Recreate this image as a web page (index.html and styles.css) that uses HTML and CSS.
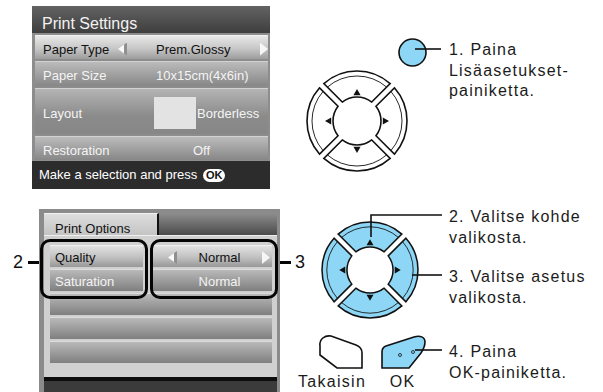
FILE: index.html
```html
<!DOCTYPE html>
<html lang="fi">
<head>
<meta charset="UTF-8">
<meta name="viewport" content="width=device-width, initial-scale=1.0">
<title>Lisäasetukset</title>
<link rel="stylesheet" href="styles.css">
</head>
<body>

<!-- Vaihe 1: Print Settings -näyttö ja Lisäasetukset-painike -->
<section class="step step-one">
  <div class="lcd lcd-settings">
    <div class="lcd-title">Print Settings</div>
    <div class="lcd-rows">
      <div class="lcd-row is-active">
        <span class="cell-label">Paper Type</span>
        <span class="arrow arrow-left"></span>
        <span class="cell-value">Prem.Glossy</span>
        <span class="arrow arrow-right"></span>
      </div>
      <div class="lcd-row row-size">
        <span class="cell-label">Paper Size</span>
        <span></span>
        <span class="cell-value">10x15cm(4x6in)</span>
      </div>
      <div class="lcd-row row-tall">
        <span class="cell-label">Layout</span>
        <span></span>
        <span class="cell-value"><span class="layout-thumb"></span>Borderless</span>
      </div>
      <div class="lcd-row">
        <span class="cell-label">Restoration</span>
        <span></span>
        <span class="cell-value value-off">Off</span>
      </div>
    </div>
    <div class="lcd-foot">Make a selection and press <span class="ok-key">OK</span></div>
  </div>

  <svg class="pad-art pad-art-one" width="179" height="195" viewBox="0 0 179 195">
    <defs>
      <g id="quarter">
        <path d="M-33.17 -37.41A50 50 0 0 1 33.17 -37.41L14.72 -18.96A24 24 0 0 0 -14.72 -18.96Z" stroke="#111" stroke-width="1.6"/>
        <path d="M-29.63 -33.87A45 45 0 0 1 29.63 -33.87" fill="none" stroke="#111" stroke-width="0.9"/>
        <path d="M0 -32L-3.6 -25.8H3.6Z" fill="#111"/>
      </g>
    </defs>
    <g transform="translate(-270 0)">
      <g transform="translate(357 121)" fill="#fff">
        <use href="#quarter"/>
        <use href="#quarter" transform="rotate(90)"/>
        <use href="#quarter" transform="rotate(180)"/>
        <use href="#quarter" transform="rotate(270)"/>
      </g>
      <circle cx="412.5" cy="52.5" r="13.5" fill="#8dd6f5" stroke="#111" stroke-width="1.6"/>
      <path d="M415 49H441" stroke="#111" stroke-width="1.6"/>
    </g>
  </svg>

  <p class="note note-one">1. Paina<br>Lisäasetukset-<br>painiketta.</p>
</section>

<!-- Vaihe 2: Print Options -näyttö ja nuolipainikkeet -->
<section class="step step-two">
  <div class="lead lead-left"><span class="lead-num">2</span><span class="lead-bar"></span></div>

  <div class="lcd lcd-options">
    <div class="lcd-tabs">
      <span class="lcd-tab">Print Options</span>
      <span class="lcd-tabfill"></span>
    </div>
    <div class="lcd-panel">
      <div class="opt-row">
        <span class="opt-cell opt-label is-active">Quality</span>
        <span class="opt-cell opt-value is-active">
          <span class="arrow arrow-left"></span>
          <span class="opt-text">Normal</span>
          <span class="arrow arrow-right"></span>
        </span>
      </div>
      <div class="opt-row">
        <span class="opt-cell opt-label">Saturation</span>
        <span class="opt-cell opt-value">
          <span class="arrow arrow-left is-hidden"></span>
          <span class="opt-text">Normal</span>
          <span class="arrow arrow-right is-hidden"></span>
        </span>
      </div>
      <div class="opt-row"><span class="opt-cell"></span></div>
      <div class="opt-row"><span class="opt-cell"></span></div>
      <div class="opt-row"><span class="opt-cell"></span></div>
    </div>
    <div class="lcd-base"></div>

    <span class="bracket bracket-left"></span>
    <span class="bracket bracket-right"></span>
  </div>

  <div class="art-col">
    <div class="art-top">
      <div class="lead lead-right"><span class="lead-bar"></span><span class="lead-num">3</span></div>
      <svg class="pad-art pad-art-two" width="144" height="177" viewBox="0 0 144 177">
        <g transform="translate(-305 -195)">
          <g transform="translate(370 270) scale(0.96)" fill="#8dd6f5">
            <use href="#quarter"/>
            <use href="#quarter" transform="rotate(90)"/>
            <use href="#quarter" transform="rotate(180)"/>
            <use href="#quarter" transform="rotate(270)"/>
          </g>
          <path d="M371 237V215H442" fill="none" stroke="#111" stroke-width="1.6"/>
          <path d="M412 275H442" stroke="#111" stroke-width="1.6"/>

          <!-- Takaisin -->
          <path d="M320 346C319 339 325 335 331 336L356 345C360 346.5 362 349 362 353L362 368L337 368L320 355Z" fill="#fff" stroke="#111" stroke-width="1.6"/>
          <!-- OK -->
          <path d="M382 368L382 352C382 349 383 347 386 346L414 337C420 335 425 337 425 342C425 347 423 350 421 353L409 368Z" fill="#8dd6f5" stroke="#111" stroke-width="1.6"/>
          <circle cx="400" cy="355" r="1.5" fill="none" stroke="#111" stroke-width="0.8"/>
          <circle cx="413" cy="352" r="1.5" fill="none" stroke="#111" stroke-width="0.8"/>
          <path d="M415 350H442" stroke="#111" stroke-width="1.6"/>
        </g>
      </svg>
    </div>
    <div class="key-names">
      <span class="key-back">Takaisin</span>
      <span class="key-ok">OK</span>
    </div>
  </div>

  <div class="notes">
    <p class="note note-two">2. Valitse kohde<br>valikosta.</p>
    <p class="note note-three">3. Valitse asetus<br>valikosta.</p>
    <p class="note note-four">4. Paina<br>OK-painiketta.</p>
  </div>
</section>

</body>
</html>
```

FILE: styles.css
```css
body {
  margin: 0;
  background: #fff;
  color: #1b1b1b;
  font-family: "Liberation Sans", Arial, sans-serif;
}

.step {
  display: flex;
  align-items: flex-start;
}

.step-one {
  height: 195px;
}

.step-two {
  height: 197px;
}

/* LCD-näytöt */
.lcd {
  box-sizing: border-box;
  flex-shrink: 0;
  font-size: 13px;
  display: flex;
  flex-direction: column;
}

.lcd-settings {
  width: 238px;
  height: 183px;
  margin: 6px 0 0 32px;
  background: #8d8d8d;
}

.lcd-title {
  height: 27px;
  box-sizing: border-box;
  padding: 8px 0 0 10px;
  font-size: 16px;
  line-height: 20px;
  color: #f2f2f2;
  background: linear-gradient(#636363, #3e3e3e);
}

.lcd-rows {
  display: flex;
  flex-direction: column;
  gap: 2px;
  padding: 2px 2px 1px 3px;
}

.lcd-row {
  height: 24px;
  box-sizing: border-box;
  padding-top: 3px;
  display: grid;
  grid-template-columns: 81px 40px 1fr 12px;
  align-items: center;
  border-top: 1px solid #d2d2d2;
  background: linear-gradient(#bbbbbb, #878787);
  color: #f4f4f4;
}

.lcd-row.is-active {
  background: linear-gradient(#e8e8e8, #c6c6c6 55%, #9d9d9d);
  border-top-color: #f2f2f2;
  color: #111;
}

.row-size {
  height: 25px;
}

.row-tall {
  height: 46px;
  background: linear-gradient(#b4b4b4, #8b8b8b 60%, #878787);
}

.cell-label {
  padding-left: 8px;
  white-space: nowrap;
}

.cell-value {
  display: flex;
  align-items: center;
  white-space: nowrap;
}

.value-off {
  padding-left: 37px;
}

.layout-thumb {
  width: 42px;
  height: 32px;
  margin-left: -2px;
  margin-right: 1px;
  background: #e3e3e3;
}

.lcd-foot {
  flex: 1;
  padding-left: 7px;
  line-height: 28px;
  color: #fff;
  background: #2c2c2c;
}

.ok-key {
  display: inline-block;
  margin-left: 2px;
  padding: 0 3px;
  font-size: 11px;
  font-weight: bold;
  line-height: 13px;
  color: #111;
  background: #fff;
  border-radius: 7px;
}

/* kolmionuolet näytöllä */
.arrow {
  display: inline-block;
  width: 9px;
  height: 13px;
}

.arrow-left {
  margin-left: 2px;
  clip-path: polygon(0 50%, 100% 0, 100% 100%);
  background: linear-gradient(to right, #fafafa 68%, #8f8f8f 68%);
}

.arrow-right {
  justify-self: end;
  width: 8px;
  clip-path: polygon(0 0, 100% 50%, 0 100%);
  background: #f6f6f6;
}

.arrow.is-hidden {
  visibility: hidden;
}

/* Print Options */
.lcd-options {
  position: relative;
  width: 241px;
  height: 183px;
  margin-top: 14px;
  padding: 4px 3px 0 5px;
  background: #8b8b8b;
}

.lcd-tabs {
  display: flex;
  height: 22px;
}

.lcd-tab {
  width: 115px;
  box-sizing: border-box;
  padding: 6px 0 0 11px;
  line-height: 17px;
  color: #111;
  background: linear-gradient(#dedede, #c3c3c3);
  border-top: 1px solid #f2f2f2;
  border-right: 2px solid #111;
}

.lcd-tabfill {
  flex: 1;
  background: linear-gradient(#8e8e8e, #4b4b4b);
}

.lcd-panel {
  display: flex;
  flex-direction: column;
  gap: 2px;
  padding: 9px 5px 14px 6px;
  background: #d0d0d0;
  border-top: 1px solid #efefef;
}

.opt-row {
  display: flex;
  gap: 9px;
  height: 22px;
}

.opt-cell {
  flex: 1;
  box-sizing: border-box;
  padding-top: 2px;
  display: flex;
  align-items: center;
  border-top: 1px solid #dcdcdc;
  background: linear-gradient(#b9b9b9, #7f7f7f);
  color: #f4f4f4;
}

.opt-cell.is-active {
  background: linear-gradient(#e2e2e2, #c0c0c0 55%, #979797);
  border-top-color: #f0f0f0;
  color: #111;
}

.opt-label {
  flex: none;
  width: 93px;
  padding-left: 5px;
}

.opt-value {
  padding-left: 14px;
  padding-right: 2px;
}

.opt-text {
  flex: 1;
  text-align: center;
}

.lcd-base {
  flex: 1;
  background: #3b3b3b;
  border-top: 4px solid #0c0c0c;
}

.bracket {
  position: absolute;
  top: 30px;
  height: 60px;
  box-sizing: border-box;
  border: 3.5px solid #050505;
  border-radius: 10px;
}

.bracket-left {
  left: 1px;
  width: 108px;
}

.bracket-right {
  left: 111px;
  width: 128px;
}

/* numeroviitteet 2 ja 3 */
.lead {
  flex-shrink: 0;
  display: flex;
  align-items: center;
  height: 24px;
  margin-top: 55px;
  font-size: 18px;
  color: #111;
}

.lead-bar {
  height: 3px;
  background: #050505;
}

.lead-left {
  width: 39px;
  box-sizing: border-box;
  padding-left: 13px;
}

.lead-left .lead-bar {
  width: 11px;
  margin-left: 5px;
}

.lead-right {
  width: 27px;
  margin-left: -2px;
}

.lead-right .lead-bar {
  width: 13px;
  margin-right: 4px;
}

/* painikekuvat */
.pad-art {
  display: block;
  flex-shrink: 0;
}

.art-col {
  width: 169px;
  flex-shrink: 0;
}

.art-top {
  display: flex;
  align-items: flex-start;
  height: 177px;
}

.key-names {
  display: flex;
  font-size: 16px;
  line-height: 20px;
  letter-spacing: 1.3px;
}

.key-back {
  width: 104px;
  text-align: center;
}

.key-ok {
  width: 37px;
  text-align: center;
}

/* ohjetekstit */
.note {
  margin: 0;
  font-size: 16px;
  line-height: 21px;
  letter-spacing: 1.2px;
  white-space: nowrap;
}

.note-one {
  margin-top: 40px;
  line-height: 20.5px;
}

.notes {
  padding-top: 11px;
}

.note-three {
  margin-top: 18px;
}

.note-four {
  margin-top: 33px;
}
```
